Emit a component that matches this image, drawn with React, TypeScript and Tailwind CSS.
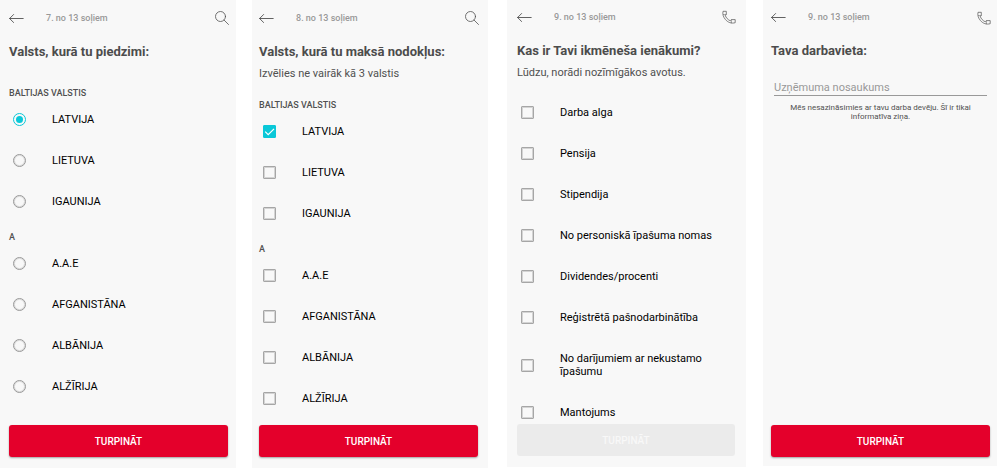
import React, { useState } from 'react';

const BackArrow = () => (
  <svg className="h-[9px] w-[15px]" viewBox="0 0 15 9" fill="none" stroke="currentColor" strokeWidth="0.9" strokeLinecap="round" strokeLinejoin="round">
    <path d="M14.2 4.5H0.6M4.6 0.5L0.6 4.5l4 4" />
  </svg>
);

const SearchIcon = () => (
  <svg className="h-[14px] w-[14px]" viewBox="0 0 14 14" fill="none" stroke="currentColor" strokeWidth="0.8" strokeLinecap="round">
    <circle cx="5.5" cy="5.5" r="5" />
    <path d="M9.1 9.1l4.4 4.4" />
  </svg>
);

const PhoneIcon = () => (
  <svg className="h-[14px] w-[14px]" viewBox="0 0 14 14" fill="none" stroke="currentColor" strokeWidth="0.7" strokeLinejoin="round">
    <path d="M1 1.3H4.3V4.6L3.2 5.3C3.9 7.6 6 9.9 8.3 10.8L9.4 9.6H13.2V12.7C9.4 13.8 5.8 12.4 3.4 9.5 1.2 6.9 0.4 4 1 1.3z" />
    <path d="M1 4.6H4.3M9.4 9.6V13.2" strokeWidth="0.5" />
  </svg>
);

interface StepHeaderProps {
  step: number;
  icon: 'search' | 'phone';
  className?: string;
}

const StepHeader: React.FC<StepHeaderProps> = ({ step, icon, className = 'h-9' }) => (
  <header className={`-mr-px flex items-center text-[#505050] ${className}`}>
    <button type="button" aria-label="Atpakaļ">
      <BackArrow />
    </button>
    <p className="ml-[22px] flex-1 text-[9px] leading-[13px] font-medium text-[#999]">{step}. no 13 soļiem</p>
    <button type="button" aria-label={icon === 'search' ? 'Meklēt' : 'Zvanīt'}>
      {icon === 'search' ? <SearchIcon /> : <PhoneIcon />}
    </button>
  </header>
);

const Title: React.FC<{ children: React.ReactNode }> = ({ children }) => (
  <h2 className="text-[13px] leading-5 font-bold whitespace-nowrap text-[#4c4c4c]">{children}</h2>
);

const Subtitle: React.FC<{ children: React.ReactNode }> = ({ children }) => (
  <p className="mt-1 text-[11px] leading-4 text-[#505050]">{children}</p>
);

const SectionLabel: React.FC<{ children: React.ReactNode }> = ({ children }) => (
  <h3 className="h-[21px] pt-2 text-[9px] leading-[14px] font-medium text-[#505050]">{children}</h3>
);

const ContinueButton: React.FC<{ disabled?: boolean }> = ({ disabled }) => (
  <button
    type="button"
    disabled={disabled}
    className="h-8 w-full shrink-0 rounded-[3px] bg-[#e4002b] text-[10px] font-medium text-white shadow-[0_1px_2px_rgba(0,0,0,0.35)] disabled:bg-[#ebebeb] disabled:text-[#f8f8f8] disabled:shadow-none"
  >
    TURPINĀT
  </button>
);

interface OptionProps {
  type: 'radio' | 'checkbox';
  name: string;
  label: string;
  checked: boolean;
  onChange: () => void;
}

const Option: React.FC<OptionProps> = ({ type, name, label, checked, onChange }) => (
  <label className="flex items-center gap-[26px] py-[14px] pl-1 text-[11px] leading-[13px] text-black">
    <span className="grid h-[13px] w-[13px] shrink-0 place-items-center">
      <input
        type={type}
        name={name}
        checked={checked}
        onChange={onChange}
        className={
          type === 'radio'
            ? 'col-start-1 row-start-1 h-[13px] w-[13px] appearance-none rounded-full border border-[#999] shadow-[inset_0_0_0_1px_#dcdcdc] checked:border-[#0ac8d8] checked:shadow-none'
            : 'col-start-1 row-start-1 h-[13px] w-[13px] appearance-none rounded-[1px] border border-[#a6a6a6] shadow-[inset_0_0_0_1px_#d4d4d4] checked:border-[#0ac8d8] checked:bg-[#0ac8d8] checked:shadow-none'
        }
      />
      {checked && type === 'radio' && <span className="col-start-1 row-start-1 h-[7px] w-[7px] rounded-full bg-[#0ac8d8]" />}
      {checked && type === 'checkbox' && (
        <svg className="pointer-events-none col-start-1 row-start-1 h-[13px] w-[13px]" viewBox="0 0 13 13" fill="none" stroke="white" strokeWidth="1.2">
          <path d="M2.2 6.6l3 3 5.8-5.8" />
        </svg>
      )}
    </span>
    <span>{label}</span>
  </label>
);

const COUNTRIES = [
  { section: 'BALTIJAS VALSTIS', items: ['LATVIJA', 'LIETUVA', 'IGAUNIJA'] },
  { section: 'A', items: ['A.A.E', 'AFGANISTĀNA', 'ALBĀNIJA', 'ALŽĪRIJA'] },
];

const INCOME_SOURCES = [
  'Darba alga',
  'Pensija',
  'Stipendija',
  'No personiskā īpašuma nomas',
  'Dividendes/procenti',
  'Reģistrētā pašnodarbinātība',
  'No darījumiem ar nekustamo īpašumu',
  'Mantojums',
];

interface CountryListProps {
  type: 'radio' | 'checkbox';
  name: string;
  selected: string[];
  onSelect: (country: string) => void;
}

const CountryList: React.FC<CountryListProps> = ({ type, name, selected, onSelect }) => (
  <div>
    {COUNTRIES.map(({ section, items }) => (
      <section key={section}>
        <SectionLabel>{section}</SectionLabel>
        {items.map((item) => (
          <Option key={item} type={type} name={name} label={item} checked={selected.includes(item)} onChange={() => onSelect(item)} />
        ))}
      </section>
    ))}
  </div>
);

const toggle = (list: string[], value: string) =>
  list.includes(value) ? list.filter((v) => v !== value) : [...list, value];

export default function App() {
  const [birthCountry, setBirthCountry] = useState('LATVIJA');
  const [taxCountries, setTaxCountries] = useState(['LATVIJA']);
  const [incomes, setIncomes] = useState<string[]>([]);
  const [employer, setEmployer] = useState('');

  return (
    <main className="grid grid-cols-[236fr_236fr_242fr_235fr] gap-x-4 bg-white pr-[3px] font-['Roboto',sans-serif]">
      <section className="flex flex-col bg-[#f8f8f8] pr-2 pb-[11px] pl-[9px]">
        <StepHeader step={7} icon="search" />
        <div className="mt-[6px] mb-4">
          <Title>Valsts, kurā tu piedzimi:</Title>
        </div>
        <CountryList type="radio" name="birth" selected={[birthCountry]} onSelect={setBirthCountry} />
        <div className="mt-auto">
          <ContinueButton />
        </div>
      </section>

      <section className="flex flex-col bg-[#f8f8f8] pr-[10px] pb-[11px] pl-[7px]">
        <StepHeader step={8} icon="search" />
        <div className="mt-[6px] mb-2">
          <Title>Valsts, kurā tu maksā nodokļus:</Title>
          <Subtitle>Izvēlies ne vairāk kā 3 valstis</Subtitle>
        </div>
        <CountryList type="checkbox" name="tax" selected={taxCountries} onSelect={(c) => setTaxCountries(toggle(taxCountries, c))} />
        <div className="mt-auto pt-[6px]">
          <ContinueButton />
        </div>
      </section>

      <section className="mb-px ml-[3px] flex flex-col bg-[#f8f8f8] pr-[11px] pb-[11px] pl-[10px]">
        <StepHeader step={9} icon="phone" className="h-[34px]" />
        <div className="mt-[7px] mb-[11px]">
          <Title>Kas ir Tavi ikmēneša ienākumi?</Title>
          <Subtitle>Lūdzu, norādi nozīmīgākos avotus.</Subtitle>
        </div>
        {/* scrolls under the button */}
        <div className="h-0 grow overflow-hidden">
          {INCOME_SOURCES.map((source) => (
            <Option
              key={source}
              type="checkbox"
              name="income"
              label={source}
              checked={incomes.includes(source)}
              onChange={() => setIncomes(toggle(incomes, source))}
            />
          ))}
        </div>
        <ContinueButton disabled={incomes.length === 0} />
      </section>

      <section className="mb-[2px] ml-px flex flex-col bg-[#f8f8f8] pr-[7px] pb-[9px] pl-2">
        <StepHeader step={9} icon="phone" className="h-[35px]" />
        <div className="mt-[6px] mb-[17px]">
          <Title>Tava darbavieta:</Title>
        </div>
        <div className="mx-[3px]">
          <input
            type="text"
            aria-label="Uzņēmuma nosaukums"
            placeholder="Uzņēmuma nosaukums"
            value={employer}
            onChange={(e) => setEmployer(e.target.value)}
            className="block h-[18px] w-full border-b border-[#999] pt-px text-[11px] text-[#4c4c4c] outline-none placeholder:text-[#999]"
          />
          <p className="mt-[7px] px-3 text-center text-[8px] leading-[9px] text-[#505050]">
            Mēs nesazināsimies ar tavu darba devēju. Šī ir tikai informatīva ziņa.
          </p>
        </div>
        <div className="mt-auto">
          <ContinueButton />
        </div>
      </section>
    </main>
  );
}
